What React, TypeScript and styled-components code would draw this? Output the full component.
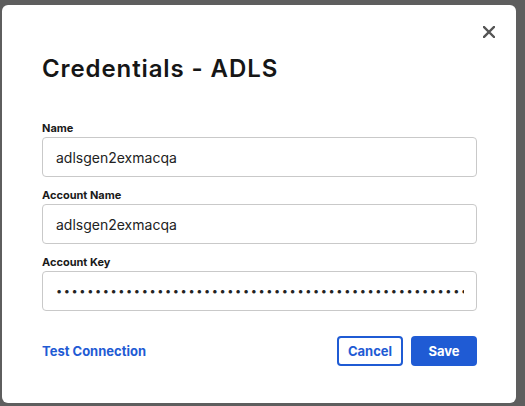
import React from 'react'
import styled, { createGlobalStyle } from 'styled-components'

const GlobalStyle = createGlobalStyle`
    html, body {
        margin: 0;
        padding: 0;
        background: #5e5e5e;
    }
    * {
        box-sizing: border-box;
    }
`

const fields = [
    { label: 'Name', value: 'adlsgen2exmacqa', type: 'text' },
    { label: 'Account Name', value: 'adlsgen2exmacqa', type: 'text' },
    { label: 'Account Key', value: 'x'.repeat(90), type: 'password' },
]

const CloseIcon = () => (
    <svg width="12" height="12" viewBox="0 0 12 12" fill="none">
        <path d="M1 1L11 11M11 1L1 11" stroke="#555" strokeWidth="2.4" strokeLinecap="square" />
    </svg>
)

const App = () => {
    return (
        <>
            <GlobalStyle />
            <Page>
                <Modal>
                    <Header>
                        <CloseButton aria-label="Close">
                            <CloseIcon />
                        </CloseButton>
                    </Header>
                    <Title>Credentials - ADLS</Title>
                    <Form>
                        {fields.map((f) => (
                            <Field key={f.label}>
                                <Label>{f.label}</Label>
                                <Input type={f.type} defaultValue={f.value} readOnly />
                            </Field>
                        ))}
                    </Form>
                    <Footer>
                        <LinkButton>Test Connection</LinkButton>
                        <Actions>
                            <OutlinedButton>Cancel</OutlinedButton>
                            <PrimaryButton>Save</PrimaryButton>
                        </Actions>
                    </Footer>
                </Modal>
            </Page>
        </>
    )
}

const Page = styled.div`
    width: 525px;
    height: 406px;
    padding: 5px 0 0 2px;
    overflow: hidden;
    font-family: Inter, 'Noto Sans', sans-serif;
`
const Modal = styled.div`
    width: 514px;
    height: 398px;
    background: #ffffff;
    border-radius: 6px;
    padding: 21px 39px 0 40px;
    display: flex;
    flex-direction: column;
`
const Header = styled.div`
    display: flex;
    justify-content: flex-end;
    margin-right: -18px;
    height: 12px;
`
const CloseButton = styled.button`
    border: none;
    background: transparent;
    padding: 0;
    line-height: 0;
    cursor: pointer;
`
const Title = styled.h1`
    margin: 17px 0 0;
    font-size: 24px;
    line-height: 28px;
    font-weight: 600;
    color: #161616;
    letter-spacing: 0.9px;
`
const Form = styled.div`
    margin-top: 38px;
    display: flex;
    flex-direction: column;
    gap: 11px;
`
const Field = styled.div`
    display: flex;
    flex-direction: column;
    gap: 2px;
`
const Label = styled.label`
    font-size: 11px;
    line-height: 14px;
    font-weight: 700;
    color: #1a1a1a;
`
const Input = styled.input`
    height: 40px;
    width: 100%;
    border: 1px solid #c9c9c9;
    border-radius: 4px;
    padding: 0 12px 0 13px;
    font-family: Inter, 'Noto Sans', sans-serif;
    font-size: 14px;
    color: #222;
    outline: none;
    background: #fff;

    &[type='password'] {
        letter-spacing: 1.6px;
        font-size: 11px;
    }
`
const Footer = styled.div`
    margin-top: 25px;
    display: flex;
    align-items: center;
    justify-content: space-between;
`
const LinkButton = styled.button`
    border: none;
    background: transparent;
    padding: 0;
    font-family: inherit;
    font-size: 13px;
    font-weight: 700;
    color: #1f5bd4;
    cursor: pointer;
`
const Actions = styled.div`
    display: flex;
    gap: 8px;
`
const ButtonBase = styled.button`
    width: 66px;
    height: 30px;
    border-radius: 4px;
    font-family: inherit;
    font-size: 13px;
    font-weight: 700;
    cursor: pointer;
`
const OutlinedButton = styled(ButtonBase)`
    background: #fff;
    border: 2px solid #1f5bd4;
    color: #1f5bd4;
`
const PrimaryButton = styled(ButtonBase)`
    background: #1f5bd4;
    border: none;
    color: #fff;
`

export default App
